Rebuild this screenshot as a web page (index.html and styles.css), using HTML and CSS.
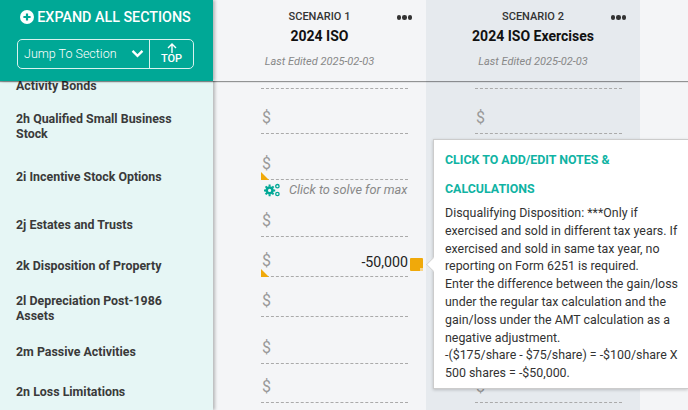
FILE: index.html
```html
<!DOCTYPE html>
<html lang="en">
<head>
    <meta charset="UTF-8">
    <meta name="viewport" content="width=device-width, initial-scale=1.0">
    <title>Scenario Comparison</title>
    <link rel="stylesheet" href="styles.css">
</head>
<body>
    <div class="page">
        <header class="top">
            <div class="top-side">
                <button class="expand">
                    <svg class="expand-icon" viewBox="0 0 14 14"><circle cx="7" cy="7" r="7" fill="#fff"/><path d="M7 3.4v7.2M3.4 7h7.2" stroke="#00a896" stroke-width="2.2"/></svg>
                    EXPAND ALL SECTIONS
                </button>
                <div class="jump">
                    <div class="jump-select">
                        <span>Jump To Section</span>
                        <svg class="chevron" viewBox="0 0 14 10"><path d="M1.5 2l5.5 5.5L12.5 2" fill="none" stroke="#fff" stroke-width="2.6"/></svg>
                    </div>
                    <div class="jump-top">
                        <svg class="arrow" viewBox="0 0 10 10"><path d="M5 10V1.5M1 5l4-4 4 4" fill="none" stroke="#fff" stroke-width="1.4"/></svg>
                        <span>TOP</span>
                    </div>
                </div>
            </div>
            <div class="scenario">
                <div class="more"><i></i><i></i><i></i></div>
                <div class="scenario-num">SCENARIO 1</div>
                <div class="scenario-name">2024 ISO</div>
                <div class="scenario-date">Last Edited 2025-02-03</div>
            </div>
            <div class="scenario alt">
                <div class="more"><i></i><i></i><i></i></div>
                <div class="scenario-num">SCENARIO 2</div>
                <div class="scenario-name">2024 ISO Exercises</div>
                <div class="scenario-date">Last Edited 2025-02-03</div>
            </div>
        </header>

        <div class="body">
            <div class="labels">
                <div class="label">Activity Bonds</div>
                <div class="label">2h Qualified Small Business Stock</div>
                <div class="label">2i Incentive Stock Options</div>
                <div class="label">2j Estates and Trusts</div>
                <div class="label">2k Disposition of Property</div>
                <div class="label">2l Depreciation Post-1986 Assets</div>
                <div class="label">2m Passive Activities</div>
                <div class="label">2n Loss Limitations</div>
            </div>

            <div class="col">
                <div class="cell r0"></div>
                <div class="cell r1"><span class="dollar">$</span></div>
                <div class="cell r2 flag"><span class="dollar">$</span></div>
                <div class="cell r3">
                    <div class="solve">
                        <svg class="gears" viewBox="0 0 16 14"><g fill="none" stroke="#00a896"><circle cx="5.6" cy="7.4" r="2.9" stroke-width="2.6"/><path d="M5.6 1.6v2M5.6 11.2v2M0 7.4h2M9.2 7.4h2M1.6 3.4l1.4 1.4M8.2 10l1.4 1.4M1.6 11.4L3 10M8.2 4.8l1.4-1.4" stroke-width="2"/><circle cx="13.4" cy="3.2" r="1.7" stroke-width="1.3"/><circle cx="13.4" cy="11" r="1.7" stroke-width="1.3"/></g></svg>
                        Click to solve for max
                    </div>
                    <span class="dollar">$</span>
                </div>
                <div class="cell r4 flag">
                    <span class="dollar">$</span>
                    <span class="amount">-50,000</span>
                    <span class="note"></span>
                </div>
                <div class="cell r5"><span class="dollar">$</span></div>
                <div class="cell r6"><span class="dollar">$</span></div>
                <div class="cell r7"><span class="dollar">$</span></div>
            </div>

            <div class="col alt">
                <div class="cell r0"></div>
                <div class="cell r1"><span class="dollar">$</span></div>
                <div class="cell r2"></div>
                <div class="cell r3"></div>
                <div class="cell r4"></div>
                <div class="cell r5"></div>
                <div class="cell r6"></div>
                <div class="cell r7"><span class="dollar">$</span></div>
            </div>

            <div class="tip">
                <div class="tip-title">CLICK TO ADD/EDIT NOTES &amp; CALCULATIONS</div>
                <div class="tip-text">
                    Disqualifying Disposition: ***Only if exercised and sold in different tax years. If exercised and sold in same tax year, no reporting on Form 6251 is required.<br>
                    Enter the difference between the gain/loss under the regular tax calculation and the gain/loss under the AMT calculation as a negative adjustment.<br>
                    -($175/share - $75/share) = -$100/share X 500 shares = -$50,000.
                </div>
            </div>
        </div>
    </div>
</body>
</html>
```

FILE: styles.css
```css
html, body {
    margin: 0;
    height: 100%;
}
body {
    font-family: Roboto, sans-serif;
    background: #f4f5f7;
    color: #333;
    overflow: hidden;
}
.page {
    height: 410px;
    overflow: hidden;
}

/* header */
.top {
    position: relative;
    z-index: 2;
    display: grid;
    grid-template-columns: 213px 213px 214px;
    height: 81px;
    background: #f4f5f7;
    box-shadow: 0 1px 1px rgba(0, 0, 0, 0.4);
}
.top-side {
    position: relative;
    z-index: 1;
    background: #00a896;
    padding: 9px 19px 0 17px;
    box-shadow: 2px 0 3px rgba(0, 0, 0, 0.25);
}
.expand {
    display: flex;
    align-items: center;
    justify-content: center;
    gap: 3px;
    width: 100%;
    padding: 0;
    background: none;
    border: none;
    color: #fff;
    font: 500 14.3px Roboto, sans-serif;
    height: 15px;
}
.expand-icon {
    width: 14px;
    height: 14px;
}
.jump {
    display: flex;
    height: 28px;
    margin-top: 15px;
    border: 1px solid #d8f2ee;
    border-radius: 5px;
    color: #fff;
}
.jump-select {
    flex: 1;
    display: flex;
    align-items: center;
    justify-content: space-between;
    padding: 0 5px 2px 6px;
    border-right: 1px solid #d8f2ee;
    font-size: 12.5px;
    font-weight: 300;
}
.chevron {
    width: 13px;
    height: 9px;
}
.jump-top {
    width: 43px;
    display: flex;
    flex-direction: column;
    align-items: center;
    justify-content: center;
    font-size: 11px;
    font-weight: 500;
    line-height: 12px;
}
.arrow {
    width: 10px;
    height: 10px;
}
.scenario {
    position: relative;
    text-align: center;
    padding-top: 10px;
}
.scenario.alt {
    background: #e6eaee;
}
.scenario-num {
    font-size: 11px;
    font-weight: 500;
    line-height: 13px;
}
.scenario-name {
    margin-top: 4px;
    font-size: 14px;
    font-weight: 700;
    line-height: 18px;
    color: #111;
}
.scenario-date {
    margin-top: 10px;
    font-size: 11px;
    font-style: italic;
    line-height: 13px;
    color: #888;
}
.more {
    position: absolute;
    top: 15px;
    right: 14px;
    display: flex;
    gap: 1px;
}
.more i {
    width: 4.5px;
    height: 4.5px;
    border-radius: 50%;
    background: #333;
}

/* body */
.body {
    position: relative;
    display: grid;
    grid-template-columns: 213px 213px 214px;
    height: 329px;
}
.labels {
    display: grid;
    grid-template-rows: 33px 58px 48px 41px 35px 51px 40px 1fr;
    margin-top: -3px;
    padding: 0 16px;
    background: #e6f6f5;
    box-shadow: 2px 0 3px rgba(0, 0, 0, 0.25);
    position: relative;
    z-index: 1;
}
.label {
    font-size: 12.4px;
    font-weight: 700;
    line-height: 15px;
    color: #3a3a3a;
}
.col.alt {
    background: #e6eaee;
}
.cell {
    position: relative;
    display: flex;
    flex-direction: column;
    justify-content: flex-end;
    margin: 0 18px 0 48px;
    padding: 0 1px 6px;
    border-bottom: 1px dashed #aaa;
    box-sizing: border-box;
}
.col.alt .cell {
    margin-left: 49px;
}
.r0 { height: 8px; padding: 0; }
.r1 { height: 45px; }
.r2 { height: 46px; }
.r3 { height: 57px; }
.r4 { height: 40px; }
.r5 { height: 40px; }
.r6 { height: 47px; }
.r7 { height: 39px; }
.dollar {
    font-size: 16px;
    line-height: 18px;
    color: #999;
}
.flag::before {
    content: "";
    position: absolute;
    left: 0;
    bottom: -1px;
    border-left: 8px solid #f0a90a;
    border-top: 8px solid transparent;
}
.solve {
    display: flex;
    align-items: center;
    gap: 9px;
    margin: 0 -1px 14px 2px;
    font-size: 12.75px;
    font-style: italic;
    line-height: 16px;
    white-space: nowrap;
    color: #888;
}
.gears {
    flex: none;
    width: 16px;
    height: 14px;
}
.amount {
    position: absolute;
    right: 0;
    bottom: 5px;
    font-size: 14.2px;
    line-height: 18px;
    color: #222;
}
.note {
    position: absolute;
    right: -15px;
    bottom: 5px;
    width: 13px;
    height: 13px;
    background: #f0a90a;
    border-radius: 1px;
}
.note::after {
    content: "";
    position: absolute;
    right: 0;
    bottom: 0;
    width: 3px;
    height: 3px;
    background: #f8d68a;
}

/* tooltip */
.tip {
    position: absolute;
    z-index: 3;
    left: 433px;
    top: 58px;
    width: 255px;
    height: 250px;
    box-sizing: border-box;
    padding: 6px 7px 0 11px;
    background: #fff;
    border: 1px solid #ccc;
    border-right: none;
    box-shadow: 0 1px 3px rgba(0, 0, 0, 0.2);
}
.tip::before {
    content: "";
    position: absolute;
    left: -7px;
    top: 118px;
    width: 12px;
    height: 12px;
    background: #fff;
    transform: rotate(45deg) scale(0.8);
    border-left: 1px solid #ccc;
    border-bottom: 1px solid #ccc;
}
.tip-title {
    font-size: 12.4px;
    font-weight: 700;
    line-height: 28.5px;
    color: #10b3a3;
}
.tip-text {
    margin-top: 1px;
    font-size: 12.4px;
    line-height: 17.8px;
    color: #333;
}
```
